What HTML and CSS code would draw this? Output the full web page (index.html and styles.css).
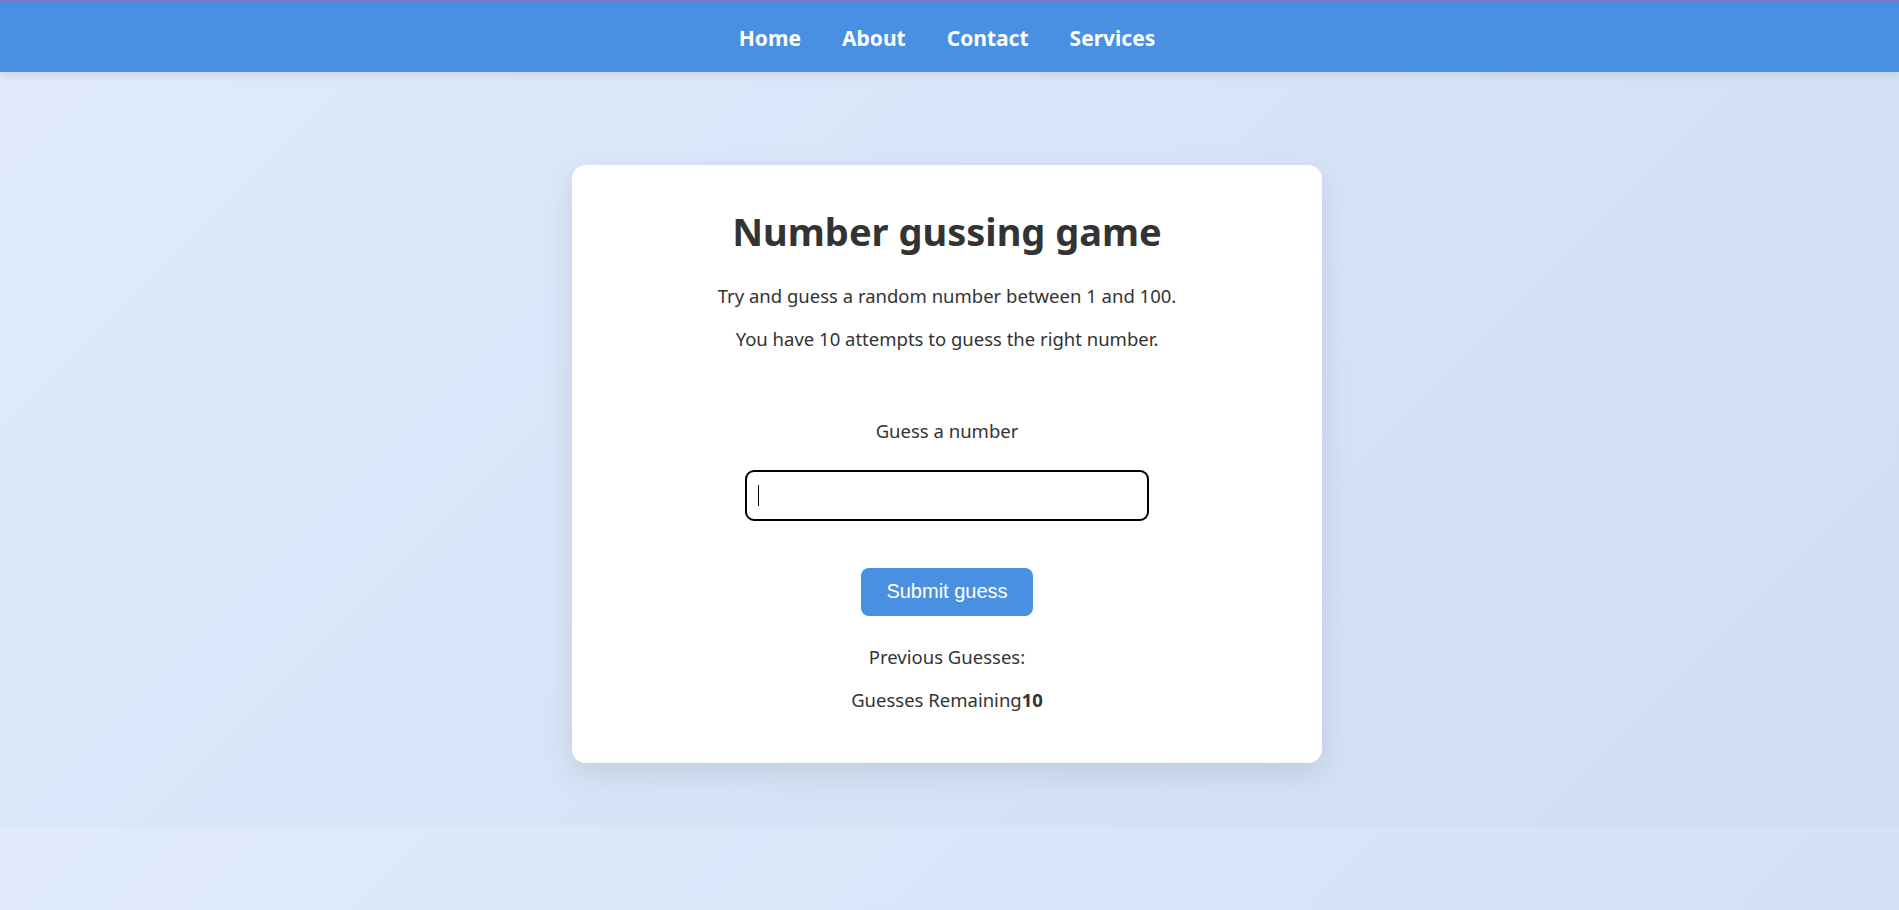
FILE: index.html
```html
<!DOCTYPE html>
<html lang="en">
<head>
<meta charset="utf-8">
<title>Number guessing game</title>
<link rel="stylesheet" href="styles.css">
</head>
<body>
  <header class="topbar">
    <nav class="nav">
      <a class="nav-link" href="#">Home</a>
      <a class="nav-link" href="#">About</a>
      <a class="nav-link" href="#">Contact</a>
      <a class="nav-link" href="#">Services</a>
    </nav>
  </header>
  <main class="main">
    <section class="card">
      <h1 class="title">Number gussing game</h1>
      <p class="intro first">Try and guess a random number between 1 and 100.</p>
      <p class="intro">You have 10 attempts to guess the right number.</p>
      <form class="form">
        <label class="label" for="guess">Guess a number</label>
        <div class="field" id="guess"><span class="caret"></span></div>
        <button class="submit" type="button">Submit guess</button>
      </form>
      <p class="info first">Previous Guesses:</p>
      <p class="info">Guesses Remaining<strong>10</strong></p>
    </section>
  </main>
</body>
</html>
```

FILE: styles.css
```css
* { box-sizing: border-box; }

body {
  margin: 0;
  font-family: "Noto Sans", "Open Sans", sans-serif;
  color: #333;
  background: linear-gradient(135deg, #e0eafc 0%, #cfdef3 100%);
}

.topbar {
  background: #4a90e2;
  border-top: 2px solid #8c6fc8;
  height: 72px;
  box-shadow: 0 2px 10px rgba(0, 0, 0, 0.1);
  display: flex;
  align-items: center;
  justify-content: center;
  padding: 2px 5px 0 0;
}

.nav {
  display: flex;
  gap: 41px;
}

.nav-link {
  color: #fff;
  text-decoration: none;
  font-weight: 700;
  font-size: 21px;
}

.main {
  display: flex;
  justify-content: center;
  padding: 93px 5px 64px 0;
}

.card {
  width: 750px;
  height: 598px;
  background: #fff;
  border-radius: 14px;
  box-shadow: 0 10px 30px rgba(0, 0, 0, 0.1);
  padding: 41px 20px 20px;
  display: flex;
  flex-direction: column;
  align-items: center;
  text-align: center;
}

.title {
  margin: 0;
  font-size: 38px;
  font-weight: 700;
  line-height: 50px;
}

.intro {
  margin: 0;
  font-size: 18.5px;
  line-height: 43px;
}
.intro.first { margin-top: 18px; }

.form {
  display: flex;
  flex-direction: column;
  align-items: center;
  margin-top: 59px;
}

.label {
  font-size: 18.5px;
  line-height: 24px;
}

.field {
  margin-top: 27px;
  width: 404px;
  height: 51px;
  border: 2px solid #000;
  border-radius: 9px;
  display: flex;
  align-items: center;
  padding-left: 11px;
  background: #fff;
}

.caret {
  width: 1px;
  height: 21px;
  background: #000;
}

.submit {
  margin-top: 47px;
  background: #4a90e2;
  color: #fff;
  border: none;
  border-radius: 8px;
  font-family: "Liberation Sans", Arial, sans-serif;
  font-size: 20px;
  line-height: 23px;
  padding: 12px 25px 13px;
}

.info {
  margin: 0;
  font-size: 18.5px;
  line-height: 43px;
}
.info.first { margin-top: 19px; }
```
